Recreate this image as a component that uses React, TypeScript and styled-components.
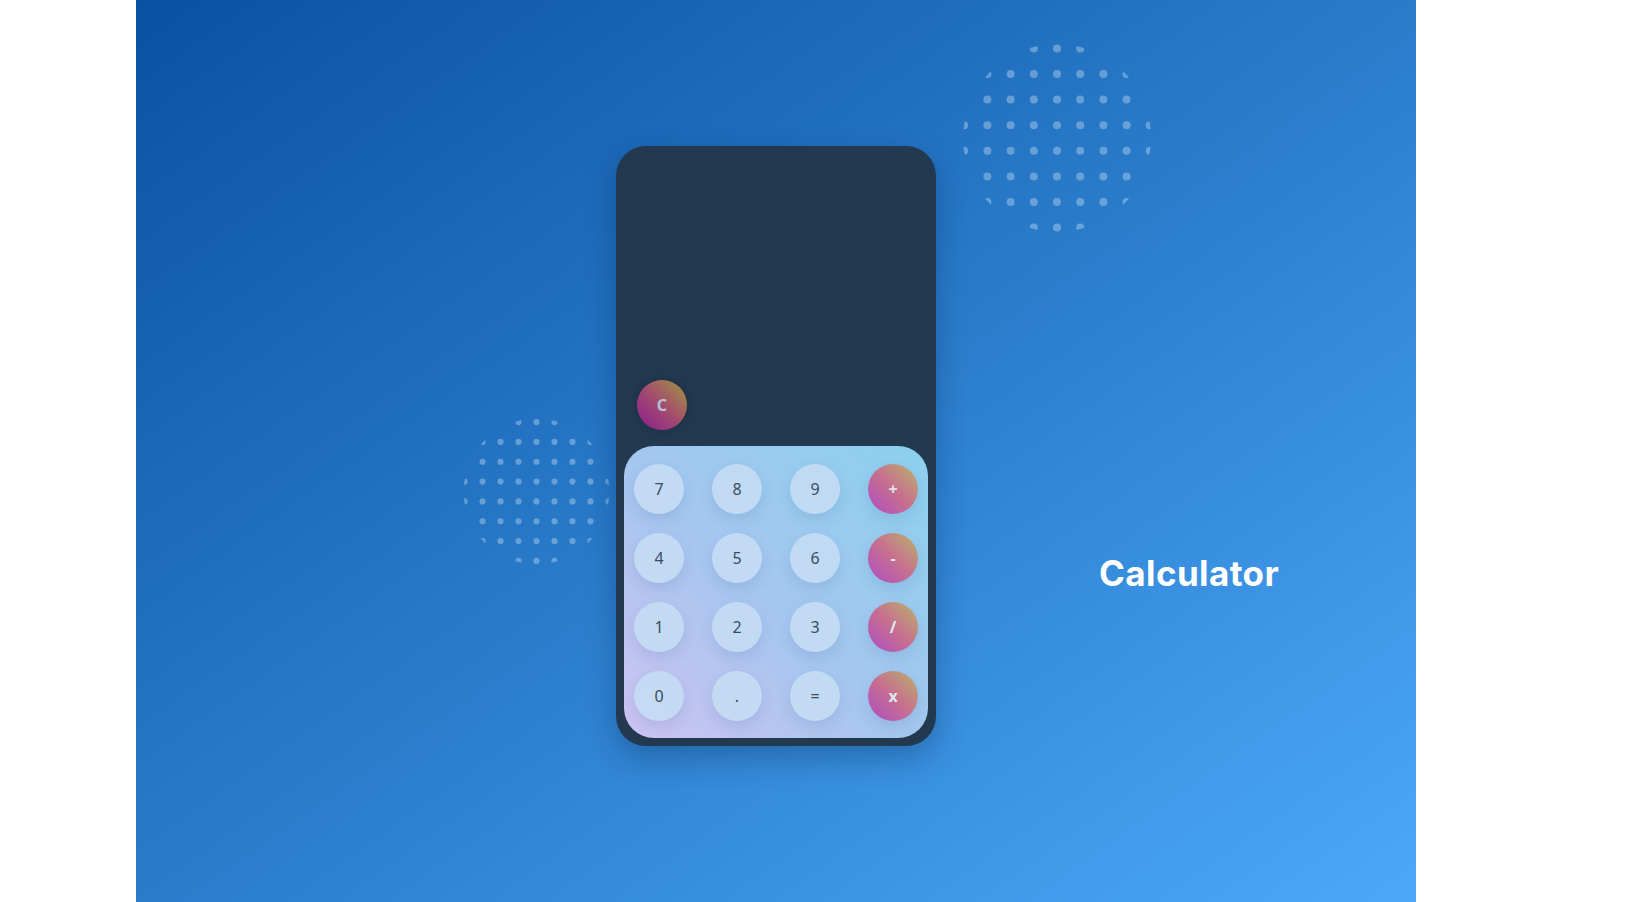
import styled, { createGlobalStyle } from 'styled-components';

const GlobalStyle = createGlobalStyle`
  html, body {
    margin: 0;
    padding: 0;
    background: #ffffff;
    font-family: "Noto Sans", "Open Sans", sans-serif;
  }
`;

const Stage = styled.main`
  position: relative;
  margin-left: 136px;
  width: 1280px;
  height: 902px;
  overflow: hidden;
  background: linear-gradient(to bottom right, #0952a1, #2a7ccb 50%, #4ca8f9);
  display: grid;
  grid-template-columns: 480px 320px 480px;
  align-items: start;
`;

const Cluster = styled.svg<{ $x: number; $y: number }>`
  position: absolute;
  left: ${(p) => p.$x}px;
  top: ${(p) => p.$y}px;
  pointer-events: none;
`;

const Calculator = styled.section`
  grid-column: 2;
  margin-top: 146px;
  width: 320px;
  height: 600px;
  box-sizing: border-box;
  padding: 0 8px 8px;
  border-radius: 30px;
  background: #233950;
  box-shadow: 0 12px 30px rgba(4, 30, 70, 0.3);
  display: flex;
  flex-direction: column;
  position: relative;
  z-index: 1;
`;

const Display = styled.div`
  flex: 1;
  display: flex;
  align-items: flex-end;
  padding: 0 0 16px 13px;
`;

const ClearButton = styled.button`
  width: 50px;
  height: 50px;
  border: none;
  border-radius: 50%;
  background: linear-gradient(45deg, #8a1c92 0%, #a44c6e 50%, #a09a3a 100%);
  color: #b4c2d8;
  font-family: "Noto Sans", sans-serif;
  font-size: 16px;
  font-weight: 700;
  box-shadow: 0 0 12px rgba(0, 0, 0, 0.18);
  cursor: pointer;
`;

const Keypad = styled.div`
  height: 292px;
  box-sizing: border-box;
  padding: 18px 10px 17px;
  border-radius: 30px;
  background: linear-gradient(45deg, #cec3f1 0%, #a6c6f0 45%, #8cd0ef 100%);
  display: grid;
  grid-template-columns: repeat(4, 50px);
  grid-auto-rows: 50px;
  justify-content: space-between;
  row-gap: 19px;
`;

const Key = styled.button<{ $op?: boolean }>`
  width: 50px;
  height: 50px;
  border: none;
  border-radius: 50%;
  padding: 0;
  font-family: "Noto Sans", sans-serif;
  font-size: 16px;
  font-weight: ${(p) => (p.$op ? 700 : 400)};
  color: ${(p) => (p.$op ? '#dde8f2' : '#3a4b62')};
  background: ${(p) =>
    p.$op
      ? 'linear-gradient(45deg, #ae4cc6 0%, #c76f8f 50%, #bab46a 100%)'
      : 'rgba(196, 219, 243, 0.92)'};
  box-shadow: 0 6px 14px rgba(60, 90, 150, 0.14);
  cursor: pointer;
`;

const Title = styled.h1`
  grid-column: 3;
  margin: 553px 0 0 163px;
  font-family: "Inter", "Liberation Sans", sans-serif;
  font-size: 35px;
  line-height: 40px;
  font-weight: 700;
  color: #ffffff;
  letter-spacing: 0.4px;
`;

function DotCluster({ x, y, size, id }: { x: number; y: number; size: number; id: string }) {
  const dots = [];
  for (let i = 0; i < 9; i++) {
    for (let j = 0; j < 8; j++) {
      dots.push(
        <circle key={`${i}-${j}`} cx={(i - 4) * 23.2} cy={(j - 3.5) * 25.6} r={4} />
      );
    }
  }
  return (
    <Cluster $x={x} $y={y} width={size} height={size} viewBox="-100 -100 200 200">
      <defs>
        <clipPath id={id}>
          <circle cx={0} cy={0} r={94} />
        </clipPath>
      </defs>
      <g clipPath={`url(#${id})`} fill="rgba(255,255,255,0.3)">
        {dots}
      </g>
    </Cluster>
  );
}

const keys: { label: string; op?: boolean }[] = [
  { label: '7' }, { label: '8' }, { label: '9' }, { label: '+', op: true },
  { label: '4' }, { label: '5' }, { label: '6' }, { label: '-', op: true },
  { label: '1' }, { label: '2' }, { label: '3' }, { label: '/', op: true },
  { label: '0' }, { label: '.' }, { label: '=' }, { label: 'x', op: true },
];

export default function App() {
  return (
    <>
      <GlobalStyle />
      <Stage>
        <DotCluster id="dots-a" x={821} y={38} size={200} />
        <DotCluster id="dots-b" x={323} y={414} size={155} />
        <Calculator>
          <Display>
            <ClearButton>C</ClearButton>
          </Display>
          <Keypad>
            {keys.map((k) => (
              <Key key={k.label} $op={k.op}>
                {k.label}
              </Key>
            ))}
          </Keypad>
        </Calculator>
        <Title>Calculator</Title>
      </Stage>
    </>
  );
}
